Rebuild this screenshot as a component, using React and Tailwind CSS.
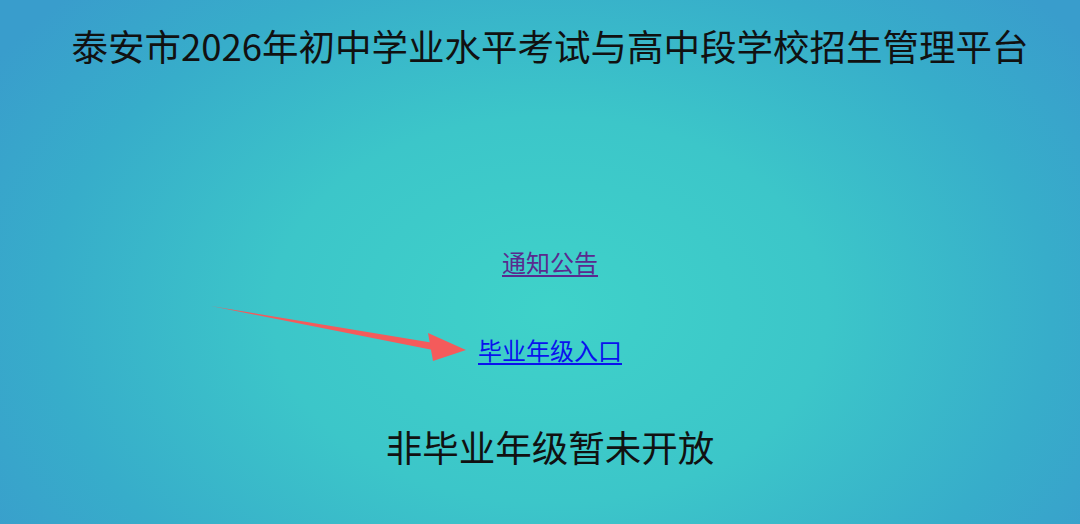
export default function App() {
  return (
    <div
      className="relative w-full h-[524px] overflow-hidden bg-[radial-gradient(ellipse_660px_460px_at_550px_310px,#3fd2c9_0%,#3cc6c9_42%,#37adca_76%,#399dcc_100%)] font-['Noto_Sans_CJK_SC','Noto_Sans',sans-serif] pl-[20px]"
    >
      <div className="flex flex-col items-center">
        <h1 className="mt-[22px] text-[36.5px] leading-[48px] text-[#111] font-normal">
          泰安市2026年初中学业水平考试与高中段学校招生管理平台
        </h1>
        <a
          href="#notice"
          className="mt-[176px] text-[24px] leading-[32px] text-[#5a2a8e] underline underline-offset-[3px]"
        >
          通知公告
        </a>
        <a
          href="#grad"
          className="mt-[56px] text-[24px] leading-[32px] text-[#0a12ee] underline underline-offset-[3px]"
        >
          毕业年级入口
        </a>
        <p className="mt-[57px] text-[36.5px] leading-[48px] text-[#111]">非毕业年级暂未开放</p>
      </div>
      <svg
        className="absolute left-0 top-0 pointer-events-none"
        width="1080"
        height="524"
        viewBox="0 0 1080 524"
      >
        <path d="M211 306 L440 344 L438 351 Z" fill="#f45b5b" />
        <path d="M428 333 L466 350 L433 361 Z" fill="#f45b5b" />
      </svg>
    </div>
  )
}
